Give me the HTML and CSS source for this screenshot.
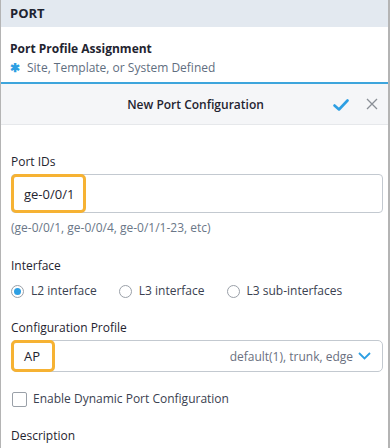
FILE: index.html
```html
<!DOCTYPE html>
<html>
<head>
<meta charset="utf-8">
<link rel="stylesheet" href="styles.css">
</head>
<body>
<div class="frame">
  <div class="section-head">PORT</div>
  <div class="assign">
    <div class="assign-title">Port Profile Assignment</div>
    <div class="assign-sub"><span class="star">&#10033;</span>Site, Template, or System Defined</div>
  </div>
  <div class="modal-head">
    <div class="modal-title">New Port Configuration</div>
    <div class="modal-actions">
      <svg class="ico-check" width="16" height="12" viewBox="0 0 16 12"><path d="M1.5 6.5 L6 10.5 L14.5 1.5" fill="none" stroke="#2d9fe3" stroke-width="2.6" stroke-linecap="round" stroke-linejoin="round"/></svg>
      <svg class="ico-close" width="12" height="12" viewBox="0 0 12 12"><path d="M1 1 L11 11 M11 1 L1 11" fill="none" stroke="#8a8f96" stroke-width="1.3"/></svg>
    </div>
  </div>
  <div class="body">
    <div class="label">Port IDs</div>
    <div class="input">
      <span class="hl">ge-0/0/1</span>
    </div>
    <div class="hint">(ge-0/0/1, ge-0/0/4, ge-0/1/1-23, etc)</div>

    <div class="label label-iface">Interface</div>
    <div class="radios">
      <label class="radio"><span class="rb on"></span>L2 interface</label>
      <label class="radio"><span class="rb"></span>L3 interface</label>
      <label class="radio"><span class="rb"></span>L3 sub-interfaces</label>
    </div>

    <div class="label label-cfg">Configuration Profile</div>
    <div class="select">
      <span class="hl hl-ap">AP</span>
      <span class="sel-val">default(1), trunk, edge</span>
      <svg class="chev" width="13" height="8" viewBox="0 0 13 8"><path d="M1 1 L6.5 6.5 L12 1" fill="none" stroke="#2d9fe3" stroke-width="1.8"/></svg>
    </div>

    <label class="check"><span class="cb"></span>Enable Dynamic Port Configuration</label>

    <div class="label label-desc">Description</div>
  </div>
</div>
</body>
</html>
```

FILE: styles.css
```css
* { box-sizing: border-box; }
html, body { margin: 0; padding: 0; }
body {
  width: 390px;
  height: 448px;
  overflow: hidden;
  background: #fff;
  font-family: "Open Sans", "Noto Sans", sans-serif;
  color: #1f2430;
}
.frame {
  width: 390px;
  height: 448px;
  border-left: 1px solid #b4b4b4;
  border-right: 2px solid #b4b4b4;
  overflow: hidden;
}
.section-head {
  height: 27px;
  background: #e3e9f0;
  font-size: 13px;
  font-weight: 700;
  line-height: 27px;
  padding-left: 9px;
  color: #1f2430;
}
.assign {
  height: 57px;
  padding: 12px 0 0 9px;
  border-bottom: 2px solid #3da5dc;
}
.assign-title {
  font-size: 12px;
  font-weight: 700;
  line-height: 19px;
}
.assign-sub {
  font-size: 12px;
  line-height: 19px;
  color: #5f6e80;
  display: flex;
  align-items: center;
}
.star {
  color: #2d9fe3;
  font-size: 12px;
  width: 17px;
  font-weight: 700;
}
.modal-head {
  height: 41px;
  background: #f5f6f8;
  border-bottom: 1px solid #e6e8eb;
  position: relative;
  display: flex;
  align-items: center;
  justify-content: center;
}
.modal-title {
  font-size: 12px;
  font-weight: 600;
  color: #1f2430;
  margin-left: 2px;
}
.modal-actions {
  position: absolute;
  right: 10px;
  top: 0;
  height: 40px;
  display: flex;
  align-items: center;
  gap: 17px;
}
.ico-check { margin-top: 1px; }
.body {
  padding: 28px 5px 0 10px;
}
.label {
  font-size: 12px;
  line-height: 18px;
  color: #1f2430;
}
.input {
  margin-top: 3px;
  height: 39px;
  border: 1px solid #c3c9d0;
  border-radius: 4px;
  display: flex;
  align-items: stretch;
}
.hl {
  border: 3px solid #f6b233;
  border-radius: 5px;
  margin: -1px;
  display: flex;
  align-items: center;
  padding: 0 9px 0 10px;
  font-size: 13px;
  color: #1f2430;
}
.hint {
  margin-top: 6px;
  font-size: 12px;
  line-height: 17px;
  color: #6a7788;
}
.label-iface { margin-top: 21px; }
.radios {
  margin-top: 7px;
  display: flex;
  gap: 22px;
}
.radio {
  display: flex;
  align-items: center;
  font-size: 12px;
  line-height: 18px;
  color: #3a4150;
}
.rb {
  width: 13px;
  height: 13px;
  border-radius: 50%;
  border: 1px solid #9aa0a8;
  margin-right: 7px;
  position: relative;
  background: #fff;
}
.rb.on::after {
  content: "";
  position: absolute;
  left: 2px;
  top: 2px;
  width: 7px;
  height: 7px;
  border-radius: 50%;
  background: #2d9fe3;
}
.label-cfg { margin-top: 19px; }
.select {
  margin-top: 3px;
  height: 32px;
  border: 1px solid #c3c9d0;
  border-radius: 5px;
  display: flex;
  align-items: stretch;
}
.hl-ap { padding: 0 12px 0 10px; }
.sel-val {
  margin-left: auto;
  display: flex;
  align-items: center;
  font-size: 12px;
  color: #6a7080;
}
.chev {
  align-self: center;
  margin: 0 11px 0 5px;
}
.check {
  margin-top: 18px;
  display: flex;
  align-items: center;
  font-size: 12px;
  line-height: 18px;
  color: #3a4150;
}
.cb {
  width: 15px;
  height: 15px;
  border: 1px solid #9aa0a8;
  border-radius: 2px;
  margin-right: 6px;
  margin-left: 1px;
}
.label-desc { margin-top: 19px; }
```
